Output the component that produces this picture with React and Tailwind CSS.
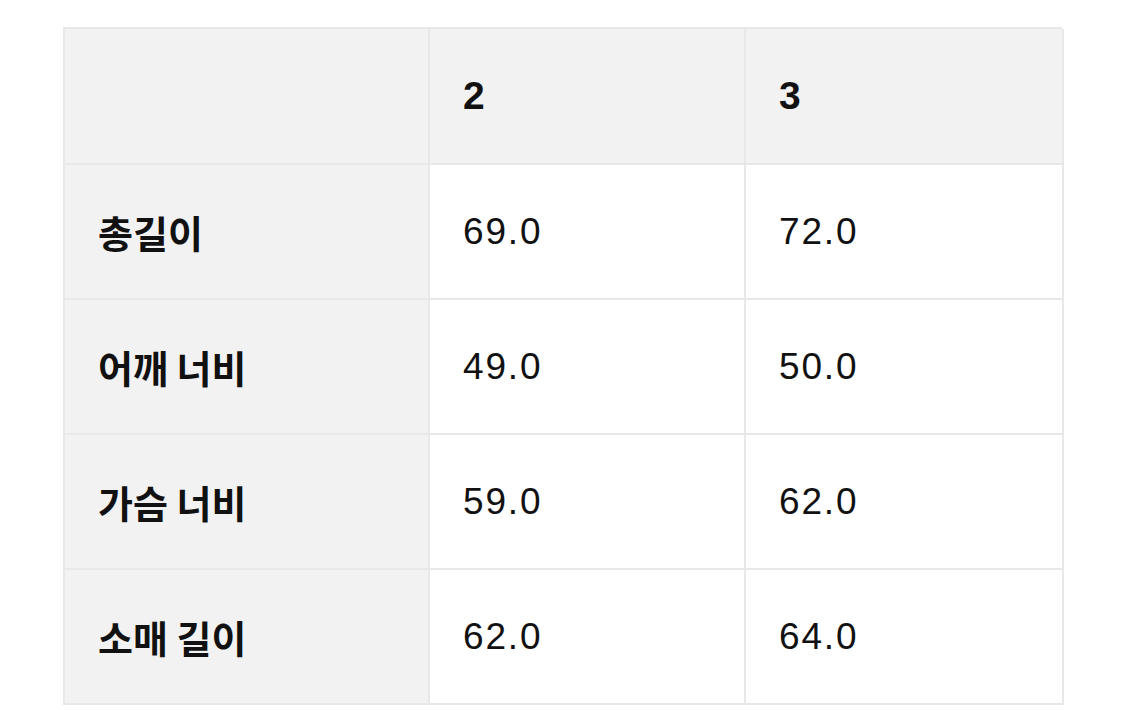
export default function App() {
  const rows = [
    ["총길이", "69.0", "72.0"],
    ["어깨 너비", "49.0", "50.0"],
    ["가슴 너비", "59.0", "62.0"],
    ["소매 길이", "62.0", "64.0"],
  ];
  const font = { fontFamily: '"Liberation Sans", "Noto Sans CJK KR", sans-serif' };
  return (
    <div className="w-[1125px] h-[710px] bg-white pt-[27px] pl-[63px]" style={font}>
      <div className="w-[999px] border-l-2 border-t-2 border-[#e8e8e8] grid grid-cols-[365px_316px_318px] text-[#111]">
        <div className="h-[136px] bg-[#f2f2f2] border-r-2 border-b-2 border-[#e8e8e8]" />
        <div className="h-[136px] bg-[#f2f2f2] border-r-2 border-b-2 border-[#e8e8e8] flex items-center pl-[33px] text-[39px] font-bold">2</div>
        <div className="h-[136px] bg-[#f2f2f2] border-r-2 border-b-2 border-[#e8e8e8] flex items-center pl-[33px] text-[39px] font-bold">3</div>
        {rows.map((r) => (
          <Row key={r[0]} r={r} />
        ))}
      </div>
    </div>
  );
}

function Row({ r }) {
  return (
    <>
      <div className="h-[135px] bg-[#f2f2f2] border-r-2 border-b-2 border-[#e8e8e8] flex items-center pl-[33px] text-[38px] font-bold" style={{ fontFamily: '"Noto Sans CJK KR", sans-serif' }}>
        {r[0]}
      </div>
      <div className="h-[135px] bg-white border-r-2 border-b-2 border-[#e8e8e8] flex items-center pl-[33px] text-[37px] tracking-[0.05em]">
        {r[1]}
      </div>
      <div className="h-[135px] bg-white border-r-2 border-b-2 border-[#e8e8e8] flex items-center pl-[33px] text-[37px] tracking-[0.05em]">
        {r[2]}
      </div>
    </>
  );
}
